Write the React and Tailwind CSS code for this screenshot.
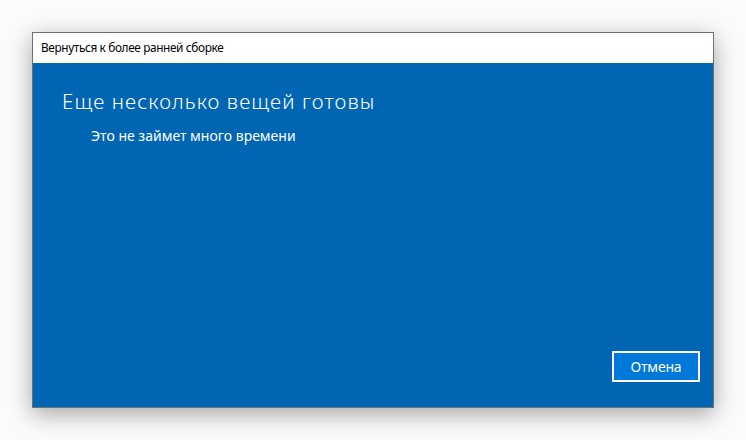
export default function App() {
  return (
    <div className="w-[746px] h-[440px] bg-[#fbfbfb] pt-[32px] pl-[32px] overflow-hidden" style={{ fontFamily: '"Noto Sans", "Open Sans", sans-serif' }}>
      <div className="w-[682px] h-[376px] border border-[#6f6f6f] flex flex-col shadow-[0_6px_22px_rgba(0,0,0,0.35)]">
        <div className="h-[30px] bg-white flex items-center pl-[8px] text-[11.8px] tracking-[-0.35px] text-black shrink-0">
          Вернуться к более ранней сборке
        </div>
        <div className="flex-1 bg-[#0066b3] flex flex-col text-white relative">
          <div className="pl-[29px] pt-[24px] text-[20.5px] font-light leading-[28px] tracking-[1.1px]">
            Еще несколько вещей готовы
          </div>
          <div className="pl-[58px] pt-[11px] text-[14px] leading-[20px]">
            Это не займет много времени
          </div>
          <div className="flex-1" />
          <div className="flex justify-end pr-[13px] pb-[25px]">
            <button className="w-[88px] h-[31px] border-2 border-white bg-[#0078d7] text-white text-[14px] tracking-[-0.2px] flex items-center justify-center">
              Отмена
            </button>
          </div>
        </div>
      </div>
    </div>
  );
}
